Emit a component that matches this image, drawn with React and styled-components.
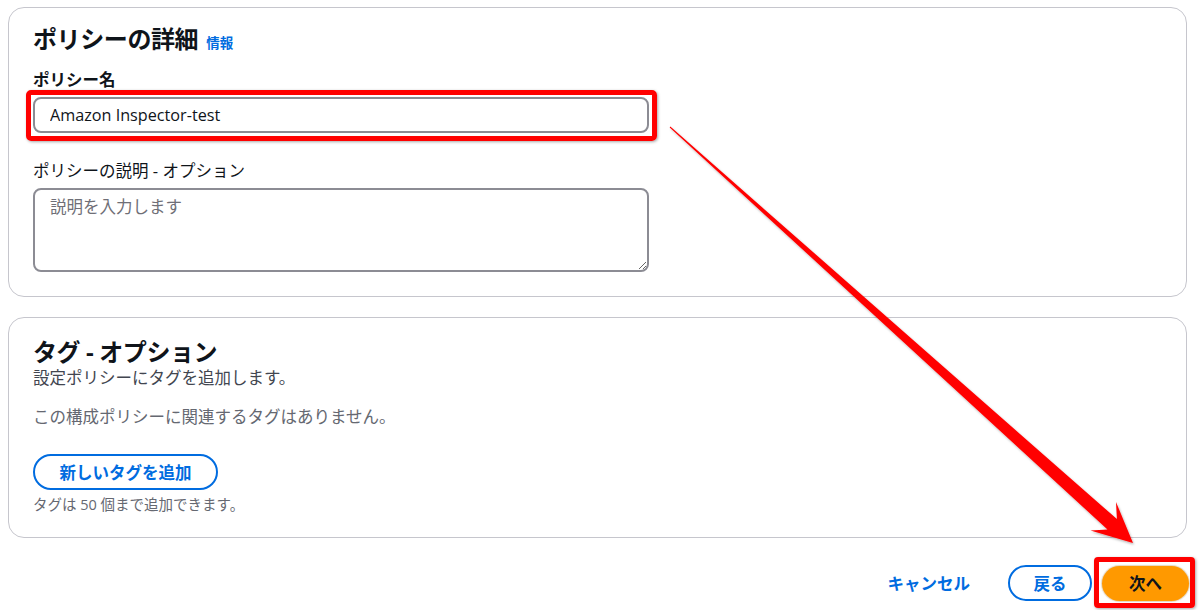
import React from "react";
import styled, { createGlobalStyle } from "styled-components";

const Global = createGlobalStyle`
  html, body { margin: 0; padding: 0; background: #ffffff; }
  body {
    font-family: "Open Sans", "Noto Sans CJK JP", sans-serif;
    color: #0f141a;
  }
  * { box-sizing: border-box; }
`;

const Page = styled.div`
  position: relative;
  width: 1200px;
  height: 610px;
  overflow: hidden;
  padding: 7px 13px 0 8px;
  display: flex;
  flex-direction: column;
`;

const Card = styled.section`
  border: 1px solid #c6c6cd;
  border-radius: 16px;
  background: #fff;
  padding: ${(p) => p.$pad};
  display: flex;
  flex-direction: column;
  & + & { margin-top: 20px; }
`;

const HeadingRow = styled.div`
  display: flex;
  align-items: baseline;
  gap: 8px;
  height: 30px;
`;

const Heading = styled.h2`
  margin: 0;
  font-size: 24px;
  line-height: 30px;
  font-weight: 700;
  letter-spacing: -0.4px;
  color: #0f141a;
`;

const InfoLink = styled.a`
  font-size: 13.5px;
  font-weight: 700;
  color: #006ce0;
  text-decoration: none;
`;

const Label = styled.label`
  display: block;
  font-size: 16.5px;
  line-height: 22px;
  font-weight: ${(p) => (p.$bold ? 700 : 400)};
  color: #0f141a;
  margin-top: ${(p) => p.$top}px;
  margin-bottom: 6px;
`;

const Highlight = styled.div`
  position: relative;
  width: 616px;
`;

const RedFrame = styled.div`
  position: absolute;
  top: -7px;
  left: -7px;
  right: -8px;
  bottom: -8px;
  border: 5px solid #ff0000;
  border-radius: 5px;
  box-shadow: 1px 1px 3px rgba(0, 0, 0, 0.35);
  pointer-events: none;
`;

const TextInput = styled.input`
  display: block;
  width: 616px;
  height: 36px;
  border: 2px solid #8c8c94;
  border-radius: 8px;
  padding: 0 15px;
  font-family: "Open Sans", "Noto Sans CJK JP", sans-serif;
  font-size: 16.2px;
  color: #0f141a;
  outline: none;
  background: #fff;
`;

const TextArea = styled.textarea`
  display: block;
  width: 616px;
  height: 84px;
  border: 2px solid #8c8c94;
  border-radius: 8px;
  padding: 6px 15px;
  font-family: "Open Sans", "Noto Sans CJK JP", sans-serif;
  font-size: 16.5px;
  line-height: 22px;
  color: #0f141a;
  outline: none;
  resize: vertical;
  background: #fff;
  &::placeholder { color: #6f6f77; }
`;

const Text = styled.p`
  margin: ${(p) => p.$top ?? 0}px 0 0 0;
  font-size: ${(p) => p.$size ?? 16.5}px;
  line-height: ${(p) => p.$lh ?? 22}px;
  color: ${(p) => p.$color ?? "#424650"};
`;

const OutlineButton = styled.button`
  height: 36px;
  padding: 0 ${(p) => p.$px ?? 24}px;
  border: 2px solid #006ce0;
  border-radius: 20px;
  background: #fff;
  color: #006ce0;
  font-family: "Open Sans", "Noto Sans CJK JP", sans-serif;
  font-size: 16.5px;
  font-weight: 700;
  white-space: nowrap;
  cursor: pointer;
  align-self: ${(p) => p.$self ?? "auto"};
  margin-top: ${(p) => p.$top ?? 0}px;
  width: ${(p) => (p.$w ? p.$w + "px" : "auto")};
`;

const Footer = styled.div`
  display: flex;
  justify-content: flex-end;
  align-items: center;
  gap: 10px;
  margin-top: 27px;
  margin-right: -2px;
`;

const LinkButton = styled.button`
  height: 36px;
  padding: 0 28px;
  border: none;
  background: transparent;
  color: #006ce0;
  font-family: "Open Sans", "Noto Sans CJK JP", sans-serif;
  font-size: 16.5px;
  font-weight: 700;
  white-space: nowrap;
`;

const PrimaryWrap = styled.div`
  position: relative;
`;

const PrimaryButton = styled.button`
  display: block;
  width: 87px;
  height: 35px;
  border: none;
  border-radius: 20px;
  background: #ff9900;
  color: #0f141a;
  font-family: "Open Sans", "Noto Sans CJK JP", sans-serif;
  font-size: 16.5px;
  font-weight: 700;
  white-space: nowrap;
  box-shadow: 0 0 1px 1px rgba(150, 90, 0, 0.25);
`;

const RedBox = styled.div`
  position: absolute;
  top: -9px;
  left: -8px;
  right: -6px;
  bottom: -7px;
  border: 5px solid #ff0000;
  border-radius: 4px;
  box-shadow: 1px 1px 3px rgba(0, 0, 0, 0.35);
  pointer-events: none;
`;

const Overlay = styled.svg`
  position: absolute;
  top: 0;
  left: 0;
  width: 1200px;
  height: 610px;
  pointer-events: none;
  overflow: visible;
`;

function Arrow() {
  return (
    <Overlay viewBox="0 0 1200 610">
      <defs>
        <filter id="sh" x="-10%" y="-10%" width="120%" height="120%">
          <feDropShadow dx="1" dy="1.5" stdDeviation="1.2" floodColor="#000" floodOpacity="0.3" />
        </filter>
      </defs>
      <polygon
        filter="url(#sh)"
        fill="#ff0000"
        points="669.7,127.4 1107.5,529.5 1090.5,530.6 1133,543 1116,502 1116.9,519.1 670.3,126.6"
      />
    </Overlay>
  );
}

export default function App() {
  return (
    <>
      <Global />
      <Page>
        <Card $pad="16px 24px 24px 24px">
          <HeadingRow>
            <Heading>ポリシーの詳細</Heading>
            <InfoLink href="#">情報</InfoLink>
          </HeadingRow>
          <Label $bold $top={15}>ポリシー名</Label>
          <Highlight>
            <TextInput readOnly value="Amazon Inspector-test" />
            <RedFrame />
          </Highlight>
          <Label $top={27}>ポリシーの説明 - オプション</Label>
          <TextArea placeholder="説明を入力します" />
        </Card>
        <Card $pad="19px 24px 23px 24px">
          <Heading>タグ - オプション</Heading>
          <Text>設定ポリシーにタグを追加します。</Text>
          <Text $top={17} $color="#656871">この構成ポリシーに関連するタグはありません。</Text>
          <OutlineButton $self="flex-start" $top={26} $w={185}>新しいタグを追加</OutlineButton>
          <Text $top={6} $size={14.5} $lh={18} $color="#656871">タグは 50 個まで追加できます。</Text>
        </Card>
        <Footer>
          <LinkButton>キャンセル</LinkButton>
          <OutlineButton $w={84} $px={0}>戻る</OutlineButton>
          <PrimaryWrap>
            <PrimaryButton>次へ</PrimaryButton>
            <RedBox />
          </PrimaryWrap>
        </Footer>
        <Arrow />
      </Page>
    </>
  );
}
